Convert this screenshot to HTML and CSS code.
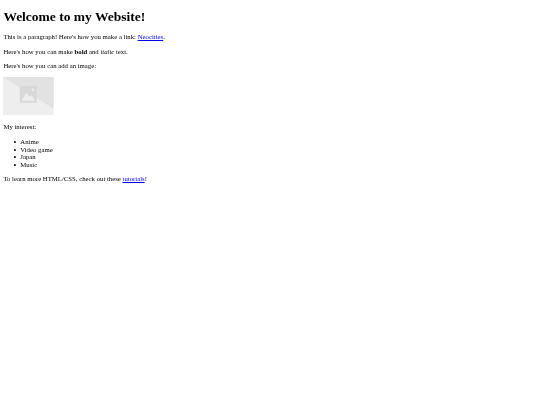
FILE: index.html
```html
<!DOCTYPE html>
<html lang="en">
<head>
	<meta charset="utf-8">
	<title>My Website</title>
	<link rel="stylesheet" href="styles.css">
</head>
<body>
	<h1>Welcome to my Website!</h1>
	<p>This is a paragraph! Here's how you make a link: <a href="#">Neocities</a>.</p>
	<p>Here's how you can make <strong>bold</strong> and <em>italic</em> text.</p>
	<p>Here's how you can add an image:</p>
	<svg class="pic" viewBox="0 0 120 90" aria-hidden="true">
		<rect width="120" height="90" fill="#eeeeee"/>
		<path d="M0 0H120V75Z" fill="#e2e2e2"/>
		<rect x="40" y="21" width="40" height="40" fill="#d8d8d8"/>
		<path d="M44 56L55 37L63 47L68 43L76 56Z" fill="#eeeeee"/>
		<circle cx="71" cy="30" r="3" fill="#eeeeee"/>
	</svg>
	<p>My interest:</p>
	<ul>
		<li>Anime</li>
		<li>Video game</li>
		<li>Japan</li>
		<li>Music</li>
	</ul>
	<p>To learn more HTML/CSS, check out these <a href="#">tutorials</a>!</p>
</body>
</html>
```

FILE: styles.css
```css
body {margin:3.375px;font-family:"Liberation Serif", serif;font-size:6.75px;line-height:7.6px;color:#000;background-color:#fff;filter:blur(0.2px);}
h1 {margin:5.5px 0 9.1px;font-size:13.5px;line-height:15.5px;}
p {margin:6.9px 0;}
ul {margin:6.9px 0;padding-left:16.9px;list-style:none;}
li {position:relative;}
li::before {content:"\2022";position:absolute;left:-6.8px;top:1px;font-size:8px;}
a {color:#00e;}
.pic {display:block;width:50.6px;height:38px;margin-bottom:8.5px;}
```
